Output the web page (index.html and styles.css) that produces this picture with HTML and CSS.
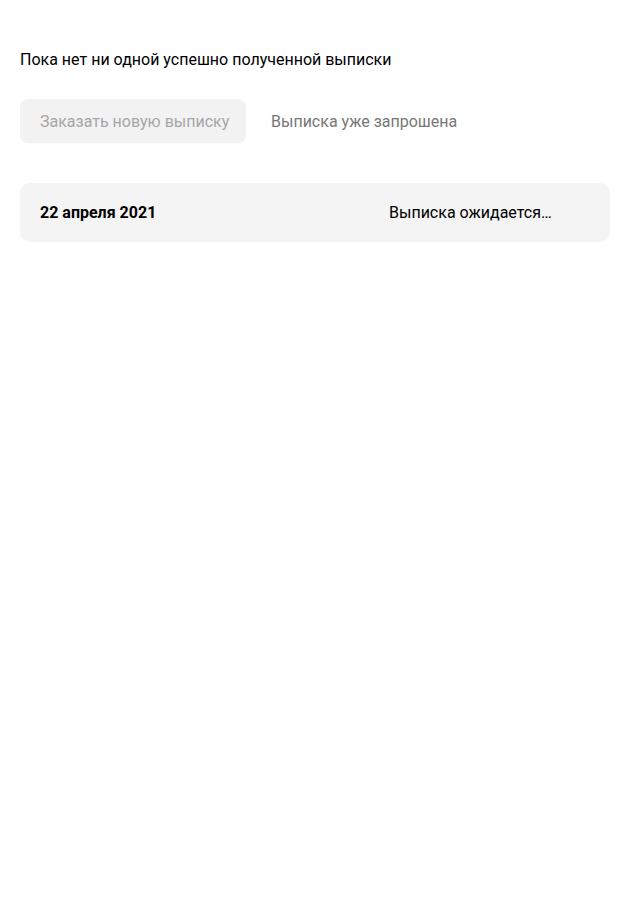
FILE: index.html
```html
<!DOCTYPE html>
<html lang="ru">
<head>
<meta charset="utf-8">
<link rel="stylesheet" href="styles.css">
</head>
<body>
<main class="page">
  <p class="empty">Пока нет ни одной успешно полученной выписки</p>
  <div class="actions">
    <button class="btn" disabled>Заказать новую выписку</button>
    <span class="note">Выписка уже запрошена</span>
  </div>
  <div class="row">
    <span class="date">22 апреля 2021</span>
    <span class="status">Выписка ожидается…</span>
  </div>
</main>
</body>
</html>
```

FILE: styles.css
```css
* { box-sizing: border-box; }
html, body { margin: 0; background: #fff; }
body { font-family: Roboto, "Noto Sans", sans-serif; color: #000; }
.page { padding: 49px 20px 0; }
.empty { margin: 0; font-size: 16px; line-height: 22px; }
.actions { display: flex; align-items: center; gap: 25px; margin-top: 28px; }
.btn {
  height: 44px; width: 226px; border: 0; border-radius: 8px;
  background: #f2f2f2; color: #a6a6a6; font: inherit; font-size: 16px;
  padding: 0 20px; text-align: left; white-space: nowrap;
}
.note { font-size: 16px; color: #777; }
.row {
  margin-top: 40px; height: 59px; border-radius: 10px; background: #f4f4f4;
  display: grid; grid-template-columns: 349px 1fr; align-items: center;
  padding: 0 20px; font-size: 16px;
}
.date { font-weight: 700; }
```
